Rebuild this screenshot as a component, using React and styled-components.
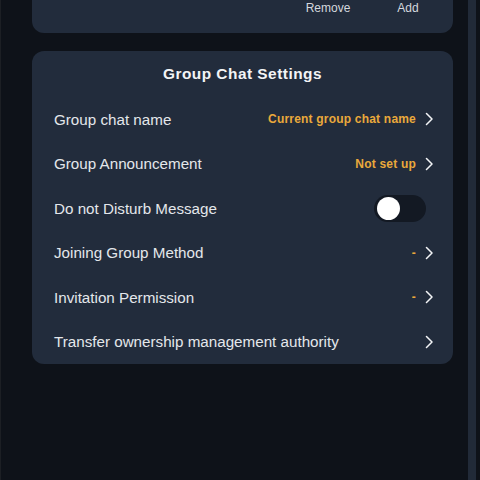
import styled, { createGlobalStyle } from "styled-components";
import { useState } from "react";

const GlobalStyle = createGlobalStyle`
  html, body {
    margin: 0;
    padding: 0;
    background: #0e1219;
    overflow: hidden;
  }
  body {
    font-family: "Liberation Sans", Arial, sans-serif;
  }
`;

const Screen = styled.div`
  width: 480px;
  height: 480px;
  display: flex;
  background: #0e1219;
  border-left: 1px solid #1c1f24;
  box-sizing: border-box;
  overflow: hidden;
`;

const Content = styled.div`
  flex: 1;
  display: flex;
  flex-direction: column;
  gap: 18px;
  padding-left: 31px;
`;

const ScrollTrack = styled.div`
  width: 8px;
  margin-right: 4px;
  background: #212a38;
`;

const Card = styled.div`
  width: 421px;
  background: #222c3c;
  border-radius: ${(p) => (p.$clipped ? "0 0 12px 12px" : "12px")};
`;

const ActionRow = styled.div`
  display: flex;
  justify-content: flex-end;
  gap: 20px;
  padding: 0 15px 17px 0;
`;

const ActionButton = styled.button`
  width: 60px;
  height: 16px;
  padding: 0;
  border: none;
  background: none;
  color: #d4d8de;
  font-family: "Liberation Sans", Arial, sans-serif;
  font-size: 12px;
  line-height: 16px;
  text-align: center;
  cursor: pointer;
`;

const Title = styled.h2`
  margin: 0;
  height: 45px;
  padding-bottom: 1px;
  display: flex;
  align-items: center;
  justify-content: center;
  color: #f3f4f6;
  font-size: 15.4px;
  font-weight: 700;
  letter-spacing: 0.5px;
`;

const Row = styled.div`
  height: 44.5px;
  display: flex;
  align-items: center;
  justify-content: space-between;
  padding: 0 20px 0 22px;
  cursor: pointer;
`;

const Label = styled.span`
  color: #e4e7eb;
  font-size: 15.2px;
`;

const Right = styled.div`
  display: flex;
  align-items: center;
  gap: 8px;
`;

const Value = styled.span`
  color: #eaa93b;
  font-size: 12px;
  font-weight: 700;
  letter-spacing: 0.2px;
`;

const Toggle = styled.button`
  width: 52px;
  height: 27px;
  margin-right: 7px;
  padding: 2px;
  border: none;
  border-radius: 14px;
  background: ${(p) => (p.$on ? "#eaa93b" : "#131923")};
  display: flex;
  align-items: center;
  justify-content: ${(p) => (p.$on ? "flex-end" : "flex-start")};
  cursor: pointer;
`;

const Knob = styled.span`
  width: 23px;
  height: 23px;
  margin-left: 1px;
  border-radius: 50%;
  background: #ffffff;
`;

const Chevron = () => (
  <svg width="9" height="14" viewBox="0 0 9 14" fill="none">
    <path
      d="M2.5 1.5 L8 7 L2.5 12.5"
      stroke="#f3f4f6"
      strokeWidth="1.5"
      strokeLinecap="round"
      strokeLinejoin="round"
    />
  </svg>
);

const settings = [
  { label: "Group chat name", value: "Current group chat name" },
  { label: "Group Announcement", value: "Not set up" },
  { label: "Do not Disturb Message", toggle: true },
  { label: "Joining Group Method", value: "-" },
  { label: "Invitation Permission", value: "-" },
  { label: "Transfer ownership management authority" },
];

const App = () => {
  const [muted, setMuted] = useState(false);

  return (
    <>
      <GlobalStyle />
      <Screen>
        <Content>
          <Card $clipped>
            <ActionRow>
              <ActionButton>Remove</ActionButton>
              <ActionButton>Add</ActionButton>
            </ActionRow>
          </Card>
          <Card>
            <Title>Group Chat Settings</Title>
            {settings.map((item) => (
              <Row key={item.label}>
                <Label>{item.label}</Label>
                {item.toggle ? (
                  <Toggle $on={muted} onClick={() => setMuted(!muted)}>
                    <Knob />
                  </Toggle>
                ) : (
                  <Right>
                    {item.value && <Value>{item.value}</Value>}
                    <Chevron />
                  </Right>
                )}
              </Row>
            ))}
          </Card>
        </Content>
        <ScrollTrack />
      </Screen>
    </>
  );
};

export default App;
